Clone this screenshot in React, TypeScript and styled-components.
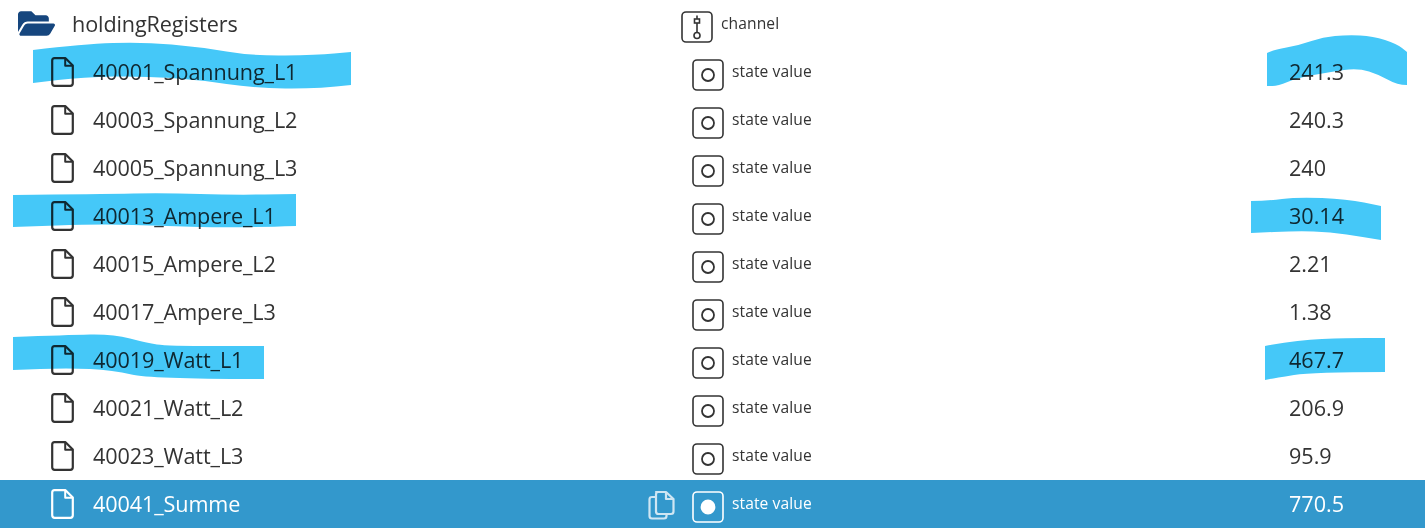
import React from 'react';
import styled, { createGlobalStyle } from 'styled-components';
import { FaFolderOpen } from 'react-icons/fa';

const GlobalStyle = createGlobalStyle`
  html, body {
    margin: 0;
    padding: 0;
    background: #fff;
    overflow: hidden;
  }
  body {
    font-family: "Open Sans", "Noto Sans", sans-serif;
    color: #333;
  }
`;

const Tree = styled.div`
  position: relative;
  width: 1425px;
  height: 529px;
  overflow: hidden;
`;

const Row = styled.div<{ $selected?: boolean }>`
  display: flex;
  align-items: center;
  height: 48px;
  background: ${(p) => (p.$selected ? '#3398cc' : 'transparent')};
  color: ${(p) => (p.$selected ? '#fff' : '#333')};
`;

const NameCell = styled.div<{ $folder?: boolean }>`
  display: flex;
  align-items: center;
  flex: none;
  position: relative;
  width: ${(p) => (p.$folder ? 681 : 692)}px;
  padding-left: ${(p) => (p.$folder ? 18 : 51)}px;
  box-sizing: border-box;
`;

const Name = styled.span<{ $folder?: boolean }>`
  font-size: 21.6px;
  line-height: 28px;
  letter-spacing: -0.1px;
  margin-left: ${(p) => (p.$folder ? 17 : 19)}px;
  font-weight: ${(p) => (p.$folder ? 400 : 400)};
  white-space: nowrap;
`;

const TypeCell = styled.div<{ $folder?: boolean }>`
  display: flex;
  align-items: center;
  flex: none;
  width: ${(p) => (p.$folder ? 608 : 597)}px;
  gap: 8px;
`;

const TypeBadge = styled.svg`
  display: block;
  flex: none;
  width: 32px;
  height: 32px;
  margin-top: 6px;
`;

const TypeLabel = styled.span`
  font-size: 15.6px;
  line-height: 20px;
  letter-spacing: 0.1px;
  margin-top: -3px;
  white-space: nowrap;
`;

const Value = styled.span`
  font-size: 21.6px;
  line-height: 28px;
  white-space: nowrap;
`;

const FolderIcon = styled(FaFolderOpen)`
  flex: none;
  width: 37px;
  height: 33px;
  color: #16467e;
  margin-top: -2px;
`;

const CopyButton = styled.svg`
  position: absolute;
  right: 16px;
  top: 50%;
  width: 28px;
  height: 30px;
  margin-top: -14px;
`;

const Marker = styled.svg`
  position: absolute;
  left: 0;
  top: 0;
  width: 1425px;
  height: 529px;
  mix-blend-mode: multiply;
  pointer-events: none;
`;

const FileIcon = () => (
  <svg width="23" height="30" viewBox="0 0 23 30" fill="none" style={{ flex: 'none' }}>
    <path
      d="M3.5 1.2H14.5L21.8 8.5V26.3Q21.8 28.8 19.3 28.8H3.7Q1.2 28.8 1.2 26.3V3.5Q1.2 1.2 3.5 1.2Z"
      stroke="currentColor"
      strokeWidth="2.2"
      strokeLinejoin="round"
    />
    <path d="M14.2 1.5V8.8H21.5" stroke="currentColor" strokeWidth="2" strokeLinejoin="round" />
  </svg>
);

const ChannelBadge = () => (
  <TypeBadge viewBox="0 0 32 32" fill="none" stroke="currentColor">
    <rect x="1" y="1" width="30" height="30" rx="4" strokeWidth="1.6" />
    <path d="M16 4.5V8M16 12V21" strokeWidth="1.6" />
    <rect x="13.5" y="8" width="5" height="4" strokeWidth="1.6" />
    <circle cx="16" cy="24.5" r="3" strokeWidth="1.6" />
  </TypeBadge>
);

const StateBadge = ({ filled }: { filled?: boolean }) => (
  <TypeBadge viewBox="0 0 32 32" fill="none" stroke="currentColor">
    <rect x="1" y="1" width="30" height="30" rx="4" strokeWidth="1.6" />
    <circle
      cx="16"
      cy="16"
      r={filled ? 6.5 : 6}
      strokeWidth="1.8"
      fill={filled ? 'currentColor' : 'none'}
    />
  </TypeBadge>
);

const CopyIcon = () => (
  <CopyButton viewBox="0 0 28 30" fill="none" stroke="#cfe6f3" strokeWidth="2.2" strokeLinejoin="round">
    <path d="M8 2H18L25.5 9V21.5Q25.5 24 23 24H10.5Q8 24 8 21.5V4.500Q8 2 10.500 2Z" />
    <path d="M18 2V9H25.500" />
    <path d="M8 7H4Q1.500 7 1.500 9.500V26Q1.500 28.500 4 28.500H16Q18.500 28.500 18.500 26V24" />
  </CopyButton>
);

type Point = [number, number];

// marker strokes, smoothed along the long edges, square at the ends
const stroke = (top: Point[], bottom: Point[]) => {
  const edge = (pts: Point[]) =>
    pts
      .slice(1, -1)
      .map((p, i) => {
        const n = pts[i + 2];
        return `Q${p[0]} ${p[1]} ${(p[0] + n[0]) / 2} ${(p[1] + n[1]) / 2}`;
      })
      .join(' ') + ` L${pts[pts.length - 1][0]} ${pts[pts.length - 1][1]}`;
  return `M${top[0][0]} ${top[0][1]} ${edge(top)} L${bottom[0][0]} ${bottom[0][1]} ${edge(bottom)} Z`;
};

const marks: string[] = [
  stroke(
    [[33, 50], [83, 44], [143, 42], [200, 47], [253, 56], [317, 55], [351, 52]],
    [[351, 85], [317, 89], [253, 88], [200, 80], [143, 76], [83, 77], [33, 83]],
  ),
  stroke(
    [[1267, 53], [1273, 50], [1300, 45], [1323, 37], [1347, 35], [1373, 36], [1397, 44], [1407, 52]],
    [[1407, 85], [1397, 85], [1380, 75], [1358, 68], [1330, 72], [1297, 78], [1278, 86], [1267, 86]],
  ),
  stroke(
    [[13, 195], [100, 194], [167, 193], [233, 195], [296, 194]],
    [[296, 226], [233, 228], [167, 226], [100, 224], [13, 227]],
  ),
  stroke(
    [[1251, 201], [1267, 201], [1297, 197], [1347, 199], [1381, 206]],
    [[1381, 240], [1363, 237], [1330, 232], [1297, 231], [1251, 233]],
  ),
  stroke(
    [[13, 337], [67, 335], [113, 334], [147, 343], [167, 346], [264, 346]],
    [[264, 379], [150, 379], [113, 370], [67, 368], [13, 370]],
  ),
  stroke(
    [[1265, 346], [1297, 340], [1347, 338], [1385, 338]],
    [[1385, 372], [1313, 372], [1275, 378], [1265, 380]],
  ),
];

const registers = [
  { name: '40001_Spannung_L1', value: '241.3' },
  { name: '40003_Spannung_L2', value: '240.3' },
  { name: '40005_Spannung_L3', value: '240' },
  { name: '40013_Ampere_L1', value: '30.14' },
  { name: '40015_Ampere_L2', value: '2.21' },
  { name: '40017_Ampere_L3', value: '1.38' },
  { name: '40019_Watt_L1', value: '467.7' },
  { name: '40021_Watt_L2', value: '206.9' },
  { name: '40023_Watt_L3', value: '95.9' },
  { name: '40041_Summe', value: '770.5', selected: true },
];

const App = () => (
  <>
    <GlobalStyle />
    <Tree>
      <Row>
        <NameCell $folder>
          <FolderIcon />
          <Name $folder>holdingRegisters</Name>
        </NameCell>
        <TypeCell $folder>
          <ChannelBadge />
          <TypeLabel>channel</TypeLabel>
        </TypeCell>
      </Row>

      {registers.map((r) => (
        <Row key={r.name} $selected={r.selected}>
          <NameCell>
            <FileIcon />
            <Name>{r.name}</Name>
            {r.selected && <CopyIcon />}
          </NameCell>
          <TypeCell>
            <StateBadge filled={r.selected} />
            <TypeLabel>state value</TypeLabel>
          </TypeCell>
          <Value>{r.value}</Value>
        </Row>
      ))}

      <Marker viewBox="0 0 1425 529">
        {marks.map((d) => (
          <path key={d} d={d} fill="#45c8f8" />
        ))}
      </Marker>
    </Tree>
  </>
);

export default App;
